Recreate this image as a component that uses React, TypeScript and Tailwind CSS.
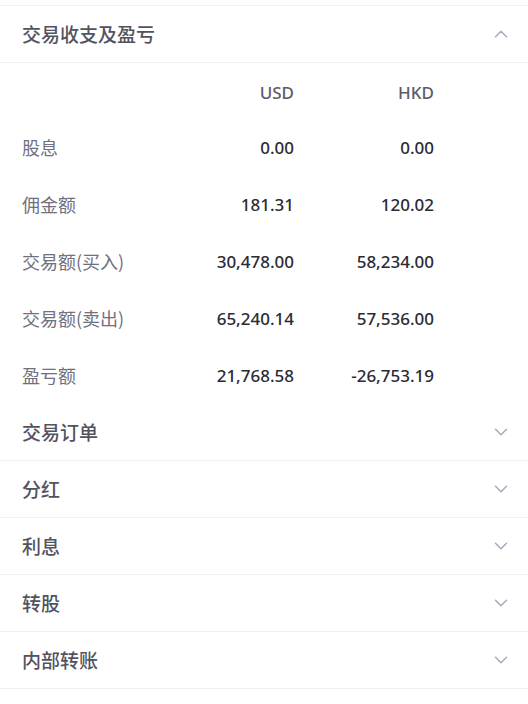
import React from 'react';
import { ChevronDown, ChevronUp } from 'lucide-react';

const ROWS = [
  { label: '股息', usd: '0.00', hkd: '0.00' },
  { label: '佣金额', usd: '181.31', hkd: '120.02' },
  { label: '交易额(买入)', usd: '30,478.00', hkd: '58,234.00' },
  { label: '交易额(卖出)', usd: '65,240.14', hkd: '57,536.00' },
  { label: '盈亏额', usd: '21,768.58', hkd: '-26,753.19' },
];

const SECTIONS = ['交易订单', '分红', '利息', '转股', '内部转账'];

const cjk = "font-['Noto_Sans_CJK_SC','Noto_Sans',sans-serif]";
const num = "font-['Noto_Sans','Roboto',sans-serif]";

const App: React.FC = () => {
  return (
    <div className={`w-[528px] h-[704px] bg-white overflow-hidden ${cjk}`}>
      <div className="h-[6px] border-b border-[#f0f0f3]" />

      {/* expanded section */}
      <div className="h-[57px] flex items-center justify-between pl-[22px] pr-[16px] border-b border-[#f0f0f3]">
        <span className="text-[19px] font-medium text-[#53535f]">交易收支及盈亏</span>
        <ChevronUp size={22} strokeWidth={1.6} className="text-[#a9a9ba]" />
      </div>

      <div>
        <div className="h-[56px] pt-[3px] flex items-center pl-[22px] pr-[94px]">
          <span className="flex-1" />
          <span className={`w-[120px] text-right text-[17px] font-medium text-[#5c5c6b] ${num}`}>USD</span>
          <span className={`w-[140px] text-right text-[17px] font-medium text-[#5c5c6b] ${num}`}>HKD</span>
        </div>
        {ROWS.map(r => (
          <div key={r.label} className="h-[57px] flex items-center pl-[22px] pr-[94px]">
            <span className="flex-1 text-[18px] text-[#70707e]">{r.label}</span>
            <span className={`w-[120px] text-right text-[17px] font-medium text-[#2b2b34] ${num}`}>{r.usd}</span>
            <span className={`w-[140px] text-right text-[17px] font-medium text-[#2b2b34] ${num}`}>{r.hkd}</span>
          </div>
        ))}
      </div>

      {SECTIONS.map(s => (
        <div key={s} className="h-[57px] flex items-center justify-between pl-[22px] pr-[16px] border-b border-[#f0f0f3]">
          <span className="text-[19px] font-medium text-[#53535f]">{s}</span>
          <ChevronDown size={22} strokeWidth={1.6} className="text-[#a9a9ba]" />
        </div>
      ))}
    </div>
  );
};

export default App;
